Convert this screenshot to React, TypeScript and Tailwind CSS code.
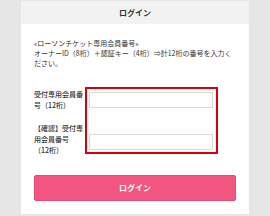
import React from "react";

const App: React.FC = () => {
  return (
    <div
      className="w-[270px] h-[216px] bg-[#e6e6e6] pt-[1px] px-[21px] overflow-hidden"
      style={{ fontFamily: '"Noto Sans CJK JP", "Noto Sans", sans-serif' }}
    >
      <div className="bg-white h-[213px]">
        <div className="h-[23px] bg-[#f2f2f2] flex items-center justify-center text-[8px] font-bold text-[#333]">
          ログイン
        </div>
        <div className="px-[13px] pt-[14px]">
          <p className="text-[7px] leading-[10px] text-[#333]">
            «ローソンチケット専用会員番号»
            <br />
            オーナーID（8桁）＋認証キー（4桁）⇒計12桁の番号を入力ください。
          </p>

          <div className="relative mt-[21px]">
            <div className="flex items-start">
              <label className="w-[55px] shrink-0 pr-[4px] text-[7px] leading-[11px] font-medium text-[#333]">
                受付専用会員番号（12桁）
              </label>
              <input
                type="text"
                className="mt-[3px] w-[124px] h-[16px] border border-[#d9d9d9] bg-white"
              />
            </div>
            <div className="flex items-start mt-[12px]">
              <label className="w-[55px] shrink-0 pr-[4px] text-[7px] leading-[11px] font-medium text-[#333]">
                【確認】受付専用会員番号
                <br />
                （12桁）
              </label>
              <input
                type="text"
                className="mt-[11px] w-[124px] h-[16px] border border-[#d9d9d9] bg-white"
              />
            </div>
            {/* highlight annotation */}
            <div className="absolute left-[51px] top-[-2px] w-[133px] h-[67px] border-2 border-[#d9000d] pointer-events-none" />
          </div>

          <button className="mt-[19px] w-full h-[26px] rounded-[2px] bg-[#f2557f] border border-[#e84a76] text-white text-[8px] font-bold">
            ログイン
          </button>
        </div>
      </div>
    </div>
  );
};

export default App;
